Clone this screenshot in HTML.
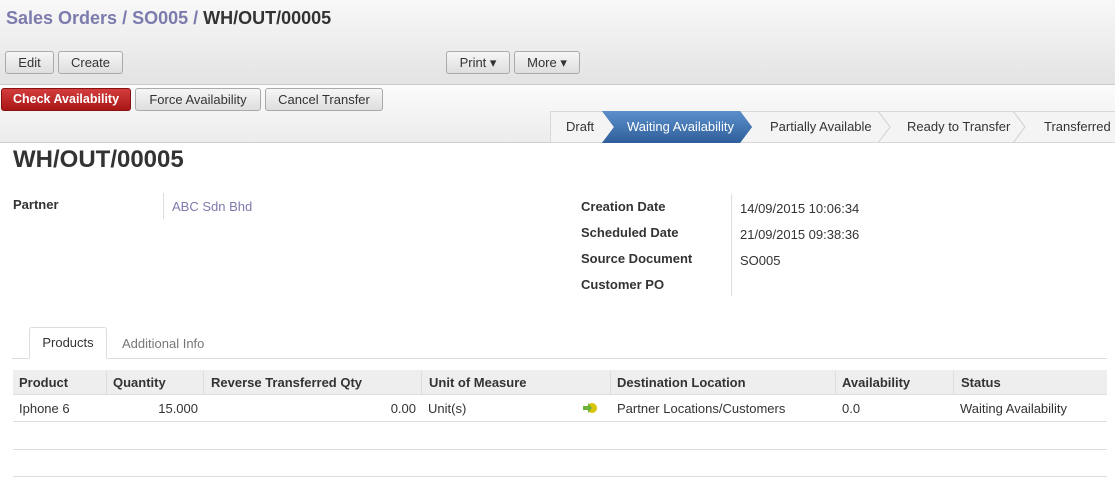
<!DOCTYPE html>
<html><head><style>
*{box-sizing:border-box;margin:0;padding:0}
body{width:1115px;height:502px;overflow:hidden;background:#fff;font-family:"Liberation Sans",Arial,sans-serif;font-size:13px;color:#333;position:relative}
.a{position:absolute}
.top{left:0;top:0;width:1115px;height:85px;background:linear-gradient(#f8f8f8,#e3e3e3);border-bottom:1px solid #cacaca}
.bar{left:0;top:85px;width:1115px;height:58px;background:linear-gradient(#fcfcfc,#ececec);border-bottom:1px solid #d0d0d0}
.btn{position:absolute;height:23px;border:1px solid #aaa;border-radius:3px;background:linear-gradient(#f6f6f6,#dedede);font-size:13px;line-height:21px;text-align:center;color:#333}
.red{background:linear-gradient(#d43d3d,#a81616);border-color:#8a1010;color:#fff;font-weight:bold;font-size:12.5px}
.lbl{font-weight:bold;font-size:13px;color:#333}
.th{position:absolute;top:375px;font-weight:bold}
.td{position:absolute;top:401px}
.sep{position:absolute;top:371px;width:1px;height:24px;background:#ddd}
</style></head><body>
<div class="a top"></div>
<div class="a" style="left:6px;top:8px;font-size:18px;font-weight:bold;color:#7c7bad">Sales Orders / SO005 / <span style="color:#333">WH/OUT/00005</span></div>
<div class="btn" style="left:5px;top:51px;width:49px">Edit</div>
<div class="btn" style="left:58px;top:51px;width:65px">Create</div>
<div class="btn" style="left:446px;top:51px;width:64px">Print ▾</div>
<div class="btn" style="left:514px;top:51px;width:66px">More ▾</div>
<div class="a bar"></div>
<div class="btn red" style="left:1px;top:88px;width:130px">Check Availability</div>
<div class="btn" style="left:135px;top:88px;width:126px">Force Availability</div>
<div class="btn" style="left:265px;top:88px;width:118px">Cancel Transfer</div>
<svg class="a" style="left:550px;top:111px" width="565" height="32">
<rect x="0.5" y="0.5" width="565" height="31" fill="#f4f4f4" stroke="#d8d8d8"/>
<polygon points="52,0 190,0 202,16 190,32 52,32 64,16" fill="#3a6eaa"/>
<polygon points="52,0 190,0 202,16 190,32 52,32 64,16" fill="url(#g)"/>
<defs><linearGradient id="g" x1="0" y1="0" x2="0" y2="1"><stop offset="0" stop-color="#5b8fcb"/><stop offset="1" stop-color="#2f5f9a"/></linearGradient></defs>
<polyline points="328,0 340,16 328,32" fill="none" stroke="#d0d0d0"/>
<polyline points="463,0 475,16 463,32" fill="none" stroke="#d0d0d0"/>
<g font-family="Liberation Sans,Arial,sans-serif" font-size="13" fill="#333">
<text x="16" y="20">Draft</text>
<text x="77" y="20" fill="#fff">Waiting Availability</text>
<text x="220" y="20">Partially Available</text>
<text x="357" y="20">Ready to Transfer</text>
<text x="494" y="20">Transferred</text>
</g></svg>
<div class="a" style="left:13px;top:146px;font-size:24px;font-weight:bold;color:#333">WH/OUT/00005</div>
<div class="a lbl" style="left:13px;top:197px">Partner</div>
<div class="a" style="left:163px;top:193px;width:1px;height:26px;background:#ddd"></div>
<div class="a" style="left:172px;top:199px;color:#7c7bad">ABC Sdn Bhd</div>
<div class="a lbl" style="left:581px;top:199px">Creation Date</div>
<div class="a lbl" style="left:581px;top:225px">Scheduled Date</div>
<div class="a lbl" style="left:581px;top:251px">Source Document</div>
<div class="a lbl" style="left:581px;top:277px">Customer PO</div>
<div class="a" style="left:731px;top:194px;width:1px;height:102px;background:#ddd"></div>
<div class="a" style="left:740px;top:201px">14/09/2015 10:06:34</div>
<div class="a" style="left:740px;top:227px">21/09/2015 09:38:36</div>
<div class="a" style="left:740px;top:253px">SO005</div>
<div class="a" style="left:12px;top:358px;width:1095px;height:1px;background:#ddd"></div>
<div class="a" style="left:29px;top:327px;width:78px;height:32px;border:1px solid #ddd;border-bottom:1px solid #fff;border-radius:3px 3px 0 0;background:#fff;text-align:center;line-height:30px">Products</div>
<div class="a" style="left:122px;top:336px;color:#777">Additional Info</div>
<div class="a" style="left:13px;top:370px;width:1094px;height:25px;background:#eee;border-bottom:1px solid #ddd"></div>
<div class="sep" style="left:106px"></div><div class="sep" style="left:203px"></div><div class="sep" style="left:421px"></div><div class="sep" style="left:610px"></div><div class="sep" style="left:835px"></div><div class="sep" style="left:953px"></div>
<div class="th" style="left:19px">Product</div>
<div class="th" style="left:113px">Quantity</div>
<div class="th" style="left:211px">Reverse Transferred Qty</div>
<div class="th" style="left:429px">Unit of Measure</div>
<div class="th" style="left:617px">Destination Location</div>
<div class="th" style="left:842px">Availability</div>
<div class="th" style="left:961px">Status</div>
<div class="td" style="left:19px">Iphone 6</div>
<div class="td" style="left:150px;width:48px;text-align:right">15.000</div>
<div class="td" style="left:350px;width:66px;text-align:right">0.00</div>
<div class="td" style="left:428px">Unit(s)</div>
<svg class="a" style="left:582px;top:401px" width="16" height="14"><circle cx="10" cy="7" r="5" fill="#d8c400"/><polygon points="1,5 6,5 6,2 10,7 6,12 6,9 1,9" fill="#6cb23a"/></svg>
<div class="td" style="left:617px">Partner Locations/Customers</div>
<div class="td" style="left:842px">0.0</div>
<div class="td" style="left:960px">Waiting Availability</div>
<div class="a" style="left:13px;top:421px;width:1094px;height:1px;background:#ddd"></div>
<div class="a" style="left:13px;top:449px;width:1094px;height:1px;background:#ddd"></div>
<div class="a" style="left:13px;top:476px;width:1094px;height:1px;background:#ddd"></div>
</body></html>
